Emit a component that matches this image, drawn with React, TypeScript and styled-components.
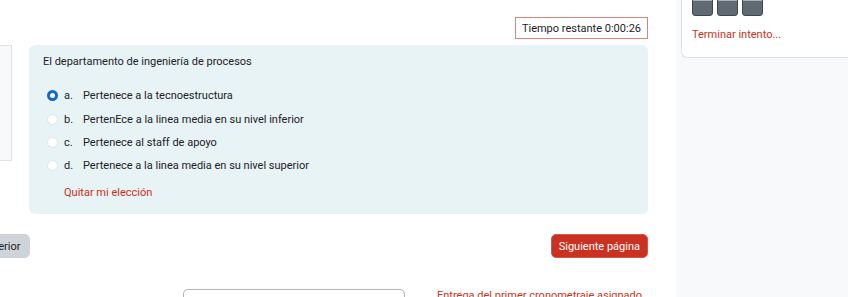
import styled, { createGlobalStyle } from 'styled-components';

const GlobalStyle = createGlobalStyle`
  html, body {
    margin: 0;
    padding: 0;
    background: #ffffff;
  }
  body {
    font-family: Roboto, "Noto Sans", sans-serif;
    font-size: 11px;
    color: #1d2125;
    -webkit-font-smoothing: antialiased;
  }
`;

const options = [
  { letter: 'a.', text: 'Pertenece a la tecnoestructura', checked: true },
  { letter: 'b.', text: 'PertenEce a la linea media en su nivel inferior', checked: false },
  { letter: 'c.', text: 'Pertenece al staff de apoyo', checked: false },
  { letter: 'd.', text: 'Pertenece a la linea media en su nivel superior', checked: false },
];

export default function App() {
  return (
    <>
      <GlobalStyle />
      <Page>
        <Main>
          <Region>
            <TimerRow>
              <Timer>Tiempo restante 0:00:26</Timer>
            </TimerRow>
            <QuestionRow>
              <InfoBox />
              <Content>
                <QText>El departamento de ingeniería de procesos</QText>
                <Answers>
                  {options.map((o) => (
                    <Option key={o.letter}>
                      <Radio $checked={o.checked} />
                      <Letter>{o.letter}</Letter>
                      <span>{o.text}</span>
                    </Option>
                  ))}
                </Answers>
                <ClearLink>Quitar mi elección</ClearLink>
              </Content>
            </QuestionRow>
            <ButtonRow>
              <Button $variant="secondary">Página anterior</Button>
              <Button $variant="primary">Siguiente página</Button>
            </ButtonRow>
            <ActivityNav>
              <span />
              <JumpSelect />
              <NextLink>Entrega del primer cronometraje asignado</NextLink>
            </ActivityNav>
          </Region>
        </Main>
        <Drawer>
          <NavCard>
            <NavButtons>
              <QnButton />
              <QnButton />
              <QnButton />
            </NavButtons>
            <FinishLink>Terminar intento...</FinishLink>
          </NavCard>
        </Drawer>
      </Page>
    </>
  );
}

const Page = styled.div`
  display: flex;
  width: 848px;
  height: 297px;
  overflow: hidden;
`;

const Main = styled.div`
  width: 676px;
  flex-shrink: 0;
  overflow: hidden;
`;

const Region = styled.div`
  margin-left: -64px;
  width: 712px;
  padding-top: 17px;
`;

const TimerRow = styled.div`
  display: flex;
  justify-content: flex-end;
`;

const Timer = styled.div`
  height: 22px;
  box-sizing: border-box;
  padding: 0 6px;
  display: flex;
  align-items: center;
  border: 1px solid #df8277;
`;

const QuestionRow = styled.div`
  display: flex;
  gap: 17px;
  margin-top: 6px;
`;

const InfoBox = styled.div`
  width: 76px;
  height: 116px;
  flex-shrink: 0;
  box-sizing: border-box;
  background: #f8f9fa;
  border: 1px solid #dee2e6;
`;

const Content = styled.div`
  flex: 1;
  height: 169px;
  box-sizing: border-box;
  background: #e7f3f5;
  border-radius: 6px;
  padding: 7px 14px 0;
`;

const QText = styled.div`
  line-height: 20px;
`;

const Answers = styled.div`
  margin-top: 12px;
  display: flex;
  flex-direction: column;
`;

const Option = styled.div`
  display: flex;
  align-items: center;
  height: 23.4px;
  padding-left: 4px;
`;

const Radio = styled.span<{ $checked: boolean }>`
  width: 11px;
  height: 11px;
  box-sizing: border-box;
  border-radius: 50%;
  flex-shrink: 0;
  background: #ffffff;
  border: ${(p) => (p.$checked ? '3.5px solid #0f6cbf' : '1px solid #e1e4e7')};
  margin-right: 6px;
`;

const Letter = styled.span`
  width: 19px;
`;

const ClearLink = styled.div`
  color: #ca3120;
  margin-top: 5px;
  padding-left: 21px;
  line-height: 20px;
`;

const ButtonRow = styled.div`
  display: flex;
  justify-content: space-between;
  margin-top: 20px;
`;

const Button = styled.button<{ $variant: 'primary' | 'secondary' }>`
  height: 24px;
  padding: 0 ${(p) => (p.$variant === 'primary' ? '7px' : '9px')};
  font: inherit;
  border-radius: 5px;
  border: 1px solid ${(p) => (p.$variant === 'primary' ? '#d8554a' : '#ced4da')};
  background: ${(p) => (p.$variant === 'primary' ? '#ca3120' : '#ced4da')};
  color: ${(p) => (p.$variant === 'primary' ? '#ffffff' : '#1d2125')};
`;

const ActivityNav = styled.div`
  display: grid;
  grid-template-columns: 247px 222px 1fr;
  margin-top: 31px;
`;

const JumpSelect = styled.div`
  height: 24px;
  box-sizing: border-box;
  border: 1px solid #adb5bd;
  border-radius: 5px;
  background: #ffffff;
`;

const NextLink = styled.div`
  color: #ca3120;
  padding-left: 32px;
  line-height: 14px;
  white-space: nowrap;
`;

const Drawer = styled.aside`
  flex: 1;
  background: #f8f9fa;
  padding-left: 5px;
`;

const NavCard = styled.div`
  height: 58px;
  box-sizing: border-box;
  background: #ffffff;
  border: 1px solid #dee2e6;
  border-top: none;
  border-right: none;
  border-bottom-left-radius: 6px;
  padding-left: 10px;
  overflow: hidden;
`;

const NavButtons = styled.div`
  display: flex;
  gap: 4px;
  margin-top: -14px;
`;

const QnButton = styled.div`
  width: 21px;
  height: 30px;
  box-sizing: border-box;
  border: 1px solid #3f4549;
  border-radius: 3px;
  background: linear-gradient(#aab0b5 0 14px, #5f6a72 14px);
`;

const FinishLink = styled.div`
  color: #ca3120;
  margin-top: 11px;
  line-height: 16px;
`;
